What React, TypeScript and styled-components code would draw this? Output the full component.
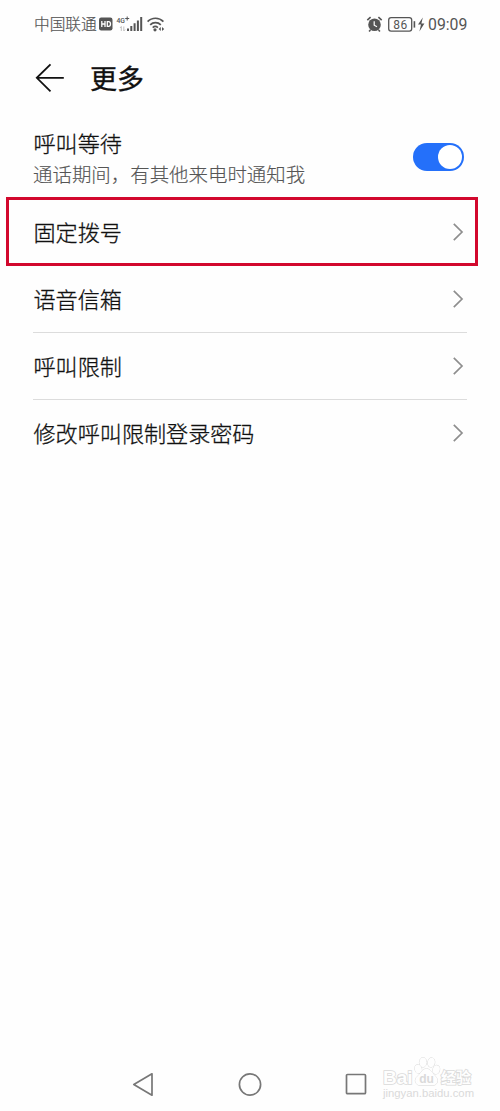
import React from "react";
import styled, { createGlobalStyle } from "styled-components";

const GlobalStyle = createGlobalStyle`
  *, *::before, *::after { box-sizing: border-box; }
  body {
    margin: 0;
    background: #fefefe;
    font-family: Roboto, "Noto Sans CJK SC", sans-serif;
    color: #111;
  }
  svg { display: block; flex: none; }
`;

const Screen = styled.div`
  position: relative;
  width: 500px;
  height: 1111px;
  display: flex;
  flex-direction: column;
  overflow: hidden;
`;

const StatusBar = styled.header`
  height: 48px;
  padding: 0 33px 0 34px;
  display: flex;
  align-items: center;
  justify-content: space-between;
  color: #555;
`;

const StatusGroup = styled.div`
  display: flex;
  align-items: center;
`;

const Carrier = styled.span`
  width: 64px;
  padding-top: 2px;
  font-size: 15.7px;
  line-height: 24px;
  font-weight: 300;
  -webkit-text-stroke: 0.2px #555;
  white-space: nowrap;
`;

const Clock = styled.span`
  width: 39px;
  margin-left: 2px;
  padding-top: 2px;
  font-size: 15.8px;
  line-height: 24px;
  white-space: nowrap;
`;

const TitleBar = styled.div`
  height: 60px;
  padding-left: 35px;
  display: flex;
  align-items: center;
  gap: 26px;
`;

const Title = styled.h1`
  margin: 0;
  padding-top: 3px;
  font-size: 27px;
  line-height: 40px;
  font-weight: 400;
  -webkit-text-stroke: 0.35px #111;
`;

const List = styled.main`
  flex: 1;
  padding: 20px 33px 0;
`;

const SwitchRow = styled.div`
  height: 71px;
  padding-right: 3px;
  display: flex;
  justify-content: space-between;
`;

const Label = styled.div`
  padding-left: 0.5px;
  font-size: 22.1px;
  line-height: 32px;
  font-weight: 300;
  -webkit-text-stroke: 0.3px #111;
`;

const Hint = styled.div`
  padding-top: 1px;
  font-size: 19.45px;
  line-height: 30px;
  font-weight: 300;
  color: #555;
  -webkit-text-stroke: 0.15px #555;
`;

const Toggle = styled.div`
  width: 51px;
  height: 28px;
  margin-top: 15px;
  padding: 2px;
  border-radius: 14px;
  background: #2470fa;
  display: flex;
  justify-content: flex-end;
`;

const Knob = styled.div`
  width: 24px;
  height: 24px;
  border-radius: 50%;
  background: #fff;
`;

const LinkRow = styled.div<{ $divider?: boolean }>`
  position: relative;
  height: 67px;
  padding: 2px 3px 0 0;
  border-bottom: 1px solid ${(p) => (p.$divider ? "#dcdcdc" : "transparent")};
  display: flex;
  align-items: center;
  justify-content: space-between;
`;

const Highlight = styled.div`
  position: absolute;
  inset: -2px -11px -1px -27px;
  border: 3px solid #d2082d;
`;

const ChevronIcon = styled.svg`
  margin-bottom: 2px;
`;

const NavBar = styled.nav`
  height: 54px;
  padding: 0 133px 0 132px;
  display: flex;
  align-items: center;
  justify-content: space-between;
`;

const Watermark = styled.div`
  position: absolute;
  left: 383px;
  top: 1056px;
  width: 92px;
  color: #fefefe;
  -webkit-text-stroke: 1.6px #dadada;
  paint-order: stroke fill;
  white-space: nowrap;
`;

const Brand = styled.div`
  height: 31px;
  display: flex;
  align-items: flex-end;
  font-family: "Liberation Sans", "Noto Sans CJK SC", sans-serif;
  font-weight: 700;
  line-height: 19px;
`;

const BrandLatin = styled.span`
  width: 30px;
  font-size: 19px;
`;

const BrandHan = styled.span`
  font-size: 15px;
`;

const Site = styled.div`
  font: 11.3px/12px "Liberation Sans", sans-serif;
  color: #dadada;
  -webkit-text-stroke: 0;
`;

const Chevron = () => (
  <ChevronIcon width="12" height="18" viewBox="0 0 12 18" fill="none" stroke="#8e8e8e" strokeWidth="1.7">
    <path d="M1.8 0.8 10 9 1.8 17.2" />
  </ChevronIcon>
);

const SignalIcons = () => (
  <svg width="68" height="20" viewBox="98 14 68 20" fill="#555">
    <rect x="99" y="17.5" width="13.5" height="13" rx="2.2" />
    <path d="M101.8 21v6M105 21v6M101.8 24H105M107.3 21.7h1.3q1.9 0 1.9 2.3t-1.9 2.3h-1.3z" fill="none" stroke="#fff" strokeWidth="1.3" />
    <text x="116.5" y="22.8" fontSize="7.5" fontWeight="500" fontFamily="Roboto" textLength="8.5" lengthAdjust="spacingAndGlyphs">4G</text>
    <path d="M127.2 16.5v4M125.2 18.5h4" stroke="#555" strokeWidth="1" />
    <path d="M121.3 31v-4.5l-1.3 1.5M123.8 26.5V31l1.3-1.5" fill="none" stroke="#bbb" strokeWidth=".9" />
    <path d="M127 28.5h2V31h-2zM130.3 26h2v5h-2zM133.6 23.2h2V31h-2zM136.9 20.5h2V31h-2zM140.2 17h2v14h-2z" />
    <g fill="none" stroke="#555" strokeWidth="1.7">
      <path d="M147.6 21.6a11 11 0 0 1 15.8 0M150.2 24.8a7.4 7.4 0 0 1 10.6 0M152.7 27.6a4 4 0 0 1 5.2 0" />
    </g>
    <circle cx="155" cy="29.8" r="1.6" />
    <path d="M160.8 27v4l-2.2-2zM162 27v4l2.2-2z" />
  </svg>
);

const PowerIcons = () => (
  <svg width="60" height="20" viewBox="366 14 60 20" fill="#555">
    <circle cx="374.5" cy="24.8" r="6.3" />
    <path d="M367.3 20.2 370.6 17.2M381.7 20.2 378.4 17.2M370.4 30l-1.3 1.6M378.6 30l1.3 1.6" stroke="#555" strokeWidth="1.6" />
    <path d="M374.2 21.3v3.9l2.8 1.5" fill="none" stroke="#fff" strokeWidth="1.2" />
    <rect x="388.7" y="17.7" width="23" height="13.4" rx="2.4" fill="none" stroke="#555" strokeWidth="1.3" />
    <text x="400.5" y="28.6" fontSize="12" fontFamily="Roboto" textAnchor="middle" letterSpacing=".4">86</text>
    <rect x="413.6" y="21.2" width="1.6" height="6.4" />
    <path d="M422.8 17.5 418 24.5h3l-1.6 7 5-8h-3z" />
  </svg>
);

const links = [
  { text: "固定拨号", highlighted: true },
  { text: "语音信箱", divider: true },
  { text: "呼叫限制", divider: true },
  { text: "修改呼叫限制登录密码" },
];

export default function App() {
  return (
    <>
      <GlobalStyle />
      <Screen>
        <StatusBar>
          <StatusGroup>
            <Carrier>中国联通</Carrier>
            <SignalIcons />
          </StatusGroup>
          <StatusGroup>
            <PowerIcons />
            <Clock>09:09</Clock>
          </StatusGroup>
        </StatusBar>
        <TitleBar>
          <svg width="29" height="30" viewBox="35 63 29 30" fill="none" stroke="#111" strokeWidth="1.8">
            <path d="M50.5 64.3 36.8 77.8 50.5 91.3M36.8 77.8H63.8" />
          </svg>
          <Title>更多</Title>
        </TitleBar>
        <List>
          <SwitchRow>
            <div>
              <Label>呼叫等待</Label>
              <Hint>通话期间，有其他来电时通知我</Hint>
            </div>
            <Toggle><Knob /></Toggle>
          </SwitchRow>
          {links.map((l) => (
            <LinkRow key={l.text} $divider={l.divider}>
              <Label>{l.text}</Label>
              <Chevron />
              {l.highlighted && <Highlight />}
            </LinkRow>
          ))}
        </List>
        <NavBar>
          <svg width="22" height="24" viewBox="0 0 22 24" fill="none" stroke="#777" strokeWidth="1.7" strokeLinejoin="round">
            <path d="M1.8 12.5 20 1.8v21.4z" />
          </svg>
          <svg width="24" height="24" viewBox="0 0 24 24" fill="none" stroke="#777" strokeWidth="1.7">
            <circle cx="12" cy="12.5" r="10.6" />
          </svg>
          <svg width="22" height="22" viewBox="0 0 22 22" fill="none" stroke="#777" strokeWidth="1.7">
            <rect x="1.5" y="1.5" width="19" height="19.2" rx="1" />
          </svg>
        </NavBar>
        <Watermark>
          <Brand>
            <BrandLatin>Bai</BrandLatin>
            <svg width="28" height="31" viewBox="413 1056 28 31" fill="#fefefe" stroke="#dadada" strokeWidth="1">
              <ellipse cx="418.3" cy="1069" rx="3.4" ry="4.5" transform="rotate(-15 418.3 1069)" />
              <ellipse cx="423" cy="1062.3" rx="3.6" ry="4.8" />
              <ellipse cx="431.3" cy="1062.5" rx="3.5" ry="4.7" transform="rotate(10 431.3 1062.5)" />
              <ellipse cx="436.3" cy="1069.7" rx="3.4" ry="4.4" transform="rotate(15 436.3 1069.7)" />
              <path d="M426.5 1068.8c4 0 5.5 4.3 8.5 7 4.5 4.2 2.5 10-3 9.5h-11c-5.5.5-8-5.5-3-9.5 3-2.7 4.5-7 8.5-7z" />
              <text x="426.5" y="1083" fontSize="12" fontWeight="700" fontFamily="Liberation Sans" textAnchor="middle" fill="#dadada" stroke="none">du</text>
            </svg>
            <BrandHan>经验</BrandHan>
          </Brand>
          <Site>jingyan.baidu.com</Site>
        </Watermark>
      </Screen>
    </>
  );
}
